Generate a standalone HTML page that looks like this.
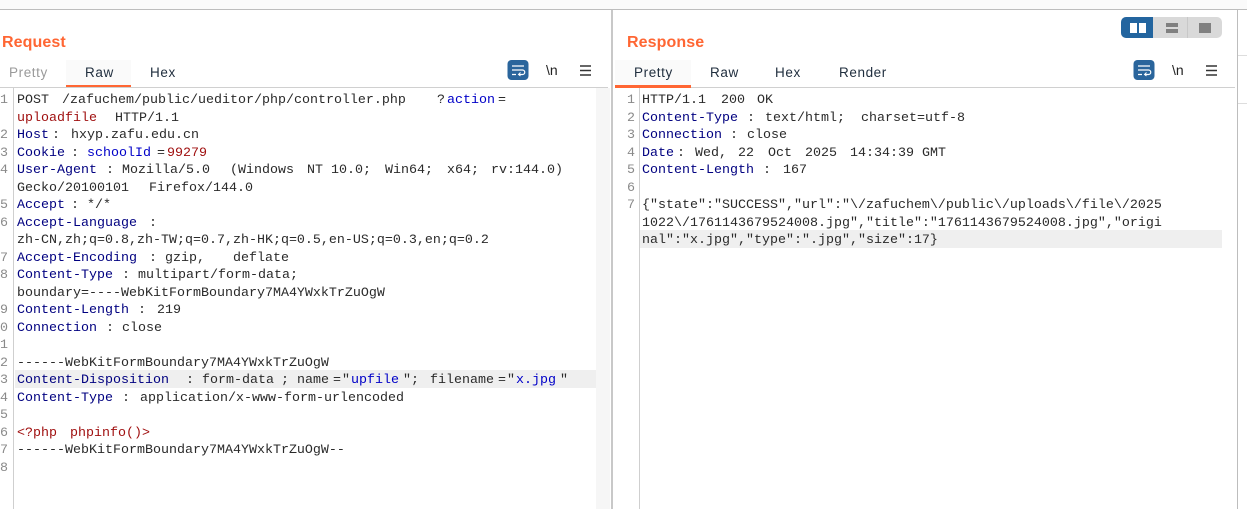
<!DOCTYPE html>
<html><head><meta charset="utf-8">
<style>
html,body{margin:0;padding:0;width:1247px;height:509px;overflow:hidden;background:#fff}
div,span{position:absolute}
.t{font:13.33px/19px "Liberation Mono",monospace;color:#2a2a2a;white-space:pre}
.n{color:#000080}.v{color:#0000c8}.r{color:#a01010}
.g{font:13.33px/19px "Liberation Mono",monospace;color:#8a8a8a;white-space:pre}
.h{font:bold 16px/20px "Liberation Sans",sans-serif;letter-spacing:.1px;color:#ff6633}
.tab{font:13.5px/18px "Liberation Sans",sans-serif;letter-spacing:.6px;color:#1f2d3d;white-space:pre}
.i{font:14px/16px "Liberation Sans",sans-serif;color:#222}
</style></head><body>
<div style="left:0;top:0;width:1247px;height:9px;background:#fafafa"></div>
<div style="left:0;top:9px;width:1247px;height:1px;background:#bdbdbd"></div>
<div style="left:611px;top:10px;width:2px;height:499px;background:#c8c8c8"></div>
<div style="left:1237px;top:10px;width:1px;height:499px;background:#bdbdbd"></div>
<div style="left:1238px;top:55px;width:9px;height:1px;background:#ddd"></div>
<div style="left:1238px;top:103px;width:9px;height:1px;background:#ddd"></div>

<div class="h" style="left:2px;top:33px">Request</div>
<div class="h" style="left:627px;top:33px">Response</div>

<!-- view toggle -->
<div style="left:1121px;top:17px;width:101px;height:21px;background:#d9d9d9;border-radius:5px"></div>
<div style="left:1121px;top:17px;width:32px;height:21px;background:#23659f;border-radius:5px 0 0 5px"></div>
<div style="left:1187px;top:17px;width:1px;height:21px;background:#c8c8c8"></div>
<div style="left:1130px;top:23px;width:7px;height:10px;background:#fff"></div>
<div style="left:1139px;top:23px;width:7px;height:10px;background:#fff"></div>
<div style="left:1166px;top:23px;width:12px;height:4px;background:#808080"></div>
<div style="left:1166px;top:29px;width:12px;height:4px;background:#808080"></div>
<div style="left:1199px;top:23px;width:12px;height:10px;background:#808080"></div>

<!-- tabs left -->
<div style="left:66px;top:60px;width:65px;height:25px;background:#fafafa"></div>
<div style="left:66px;top:85px;width:65px;height:3px;background:#ff6633"></div>
<div class="tab" style="left:9px;top:64px;color:#9a9a9a">Pretty</div>
<div class="tab" style="left:85px;top:64px">Raw</div>
<div class="tab" style="left:150px;top:64px">Hex</div>
<!-- tabs right -->
<div style="left:615px;top:60px;width:76px;height:25px;background:#fafafa"></div>
<div style="left:615px;top:85px;width:76px;height:3px;background:#ff6633"></div>
<div class="tab" style="left:634px;top:64px">Pretty</div>
<div class="tab" style="left:710px;top:64px">Raw</div>
<div class="tab" style="left:775px;top:64px">Hex</div>
<div class="tab" style="left:839px;top:64px">Render</div>

<div style="left:0;top:87px;width:608px;height:1px;background:#d0d0d0"></div>
<div style="left:691px;top:87px;width:544px;height:1px;background:#d0d0d0"></div>

<!-- icons left -->
<svg style="position:absolute;left:507px;top:60px" width="22" height="20" viewBox="0 0 22 20"><rect x="0.5" y="0" width="21" height="20" rx="4" fill="#2a659c"/><path d="M5 6H17M5 10H15.5a2 2 0 0 1 0 4.500H12M5 14.500H9" stroke="#fff" stroke-width="1.200" fill="none"/><path d="M13.500 12.500L11.500 14.500L13.500 16" stroke="#fff" stroke-width="1" fill="none"/></svg>
<div class="i" style="left:546px;top:62px">\n</div>
<svg style="position:absolute;left:580px;top:65px" width="12" height="11"><path d="M0 1H11M0 5.500H11M0 10H11" stroke="#333" stroke-width="1.400"/></svg>
<!-- icons right -->
<svg style="position:absolute;left:1133px;top:60px" width="22" height="20" viewBox="0 0 22 20"><rect x="0.5" y="0" width="21" height="20" rx="4" fill="#2a659c"/><path d="M5 6H17M5 10H15.5a2 2 0 0 1 0 4.500H12M5 14.500H9" stroke="#fff" stroke-width="1.200" fill="none"/><path d="M13.500 12.500L11.500 14.500L13.500 16" stroke="#fff" stroke-width="1" fill="none"/></svg>
<div class="i" style="left:1172px;top:62px">\n</div>
<svg style="position:absolute;left:1206px;top:65px" width="12" height="11"><path d="M0 1H11M0 5.500H11M0 10H11" stroke="#333" stroke-width="1.400"/></svg>

<!-- left editor -->
<div style="left:13px;top:88px;width:1px;height:421px;background:#cfcfcf"></div>
<div style="left:596px;top:88px;width:14px;height:421px;background:#f6f6f6"></div>
<div style="left:15px;top:370px;width:581px;height:18px;background:#efefef"></div>
<!-- right editor -->
<div style="left:639px;top:88px;width:1px;height:421px;background:#cfcfcf"></div>
<div style="left:640px;top:230px;width:582px;height:18px;background:#efefef"></div>

<!-- gutter left -->
<span class="g" style="left:0;top:91px">1</span>
<span class="g" style="left:0;top:126px">2</span>
<span class="g" style="left:0;top:144px">3</span>
<span class="g" style="left:0;top:161px">4</span>
<span class="g" style="left:0;top:196px">5</span>
<span class="g" style="left:0;top:214px">6</span>
<span class="g" style="left:0;top:249px">7</span>
<span class="g" style="left:0;top:266px">8</span>
<span class="g" style="left:0;top:301px">9</span>
<span class="g" style="left:0;top:319px">0</span>
<span class="g" style="left:0;top:336px">1</span>
<span class="g" style="left:0;top:354px">2</span>
<span class="g" style="left:0;top:371px">3</span>
<span class="g" style="left:0;top:389px">4</span>
<span class="g" style="left:0;top:406px">5</span>
<span class="g" style="left:0;top:424px">6</span>
<span class="g" style="left:0;top:441px">7</span>
<span class="g" style="left:0;top:459px">8</span>

<!-- left text -->
<span class="t" style="left:17px;top:91px">POST</span>
<span class="t" style="left:62px;top:91px">/zafuchem/public/ueditor/php/controller.php</span>
<span class="t" style="left:437px;top:91px">?</span>
<span class="t v" style="left:447px;top:91px">action</span>
<span class="t" style="left:498px;top:91px">=</span>

<span class="t r" style="left:17px;top:109px">uploadfile</span>
<span class="t" style="left:115px;top:109px">HTTP/1.1</span>

<span class="t n" style="left:17px;top:126px">Host</span>
<span class="t" style="left:52px;top:126px">:</span>
<span class="t" style="left:71px;top:126px">hxyp.zafu.edu.cn</span>

<span class="t n" style="left:17px;top:144px">Cookie</span>
<span class="t" style="left:71px;top:144px">:</span>
<span class="t v" style="left:87px;top:144px">schoolId</span>
<span class="t" style="left:157px;top:144px">=</span>
<span class="t r" style="left:167px;top:144px">99279</span>

<span class="t n" style="left:17px;top:161px">User-Agent</span>
<span class="t" style="left:106px;top:161px">:</span>
<span class="t" style="left:122px;top:161px">Mozilla/5.0</span>
<span class="t" style="left:230px;top:161px">(Windows</span>
<span class="t" style="left:307px;top:161px">NT</span>
<span class="t" style="left:331px;top:161px">10.0;</span>
<span class="t" style="left:385px;top:161px">Win64;</span>
<span class="t" style="left:447px;top:161px">x64;</span>
<span class="t" style="left:491px;top:161px">rv:144.0)</span>

<span class="t" style="left:17px;top:179px">Gecko/20100101</span>
<span class="t" style="left:149px;top:179px">Firefox/144.0</span>

<span class="t n" style="left:17px;top:196px">Accept</span>
<span class="t" style="left:71px;top:196px">:</span>
<span class="t" style="left:87px;top:196px">*/*</span>

<span class="t n" style="left:17px;top:214px">Accept-Language</span>
<span class="t" style="left:149px;top:214px">:</span>

<span class="t" style="left:17px;top:231px">zh-CN,zh;q=0.8,zh-TW;q=0.7,zh-HK;q=0.5,en-US;q=0.3,en;q=0.2</span>

<span class="t n" style="left:17px;top:249px">Accept-Encoding</span>
<span class="t" style="left:149px;top:249px">:</span>
<span class="t" style="left:165px;top:249px">gzip,</span>
<span class="t" style="left:233px;top:249px">deflate</span>

<span class="t n" style="left:17px;top:266px">Content-Type</span>
<span class="t" style="left:122px;top:266px">:</span>
<span class="t" style="left:138px;top:266px">multipart/form-data;</span>

<span class="t" style="left:17px;top:284px">boundary=----WebKitFormBoundary7MA4YWxkTrZuOgW</span>

<span class="t n" style="left:17px;top:301px">Content-Length</span>
<span class="t" style="left:138px;top:301px">:</span>
<span class="t" style="left:157px;top:301px">219</span>

<span class="t n" style="left:17px;top:319px">Connection</span>
<span class="t" style="left:106px;top:319px">:</span>
<span class="t" style="left:122px;top:319px">close</span>

<span class="t" style="left:17px;top:354px">------WebKitFormBoundary7MA4YWxkTrZuOgW</span>

<span class="t n" style="left:17px;top:371px">Content-Disposition</span>
<span class="t" style="left:186px;top:371px">:</span>
<span class="t" style="left:202px;top:371px">form-data</span>
<span class="t" style="left:281px;top:371px">;</span>
<span class="t" style="left:297px;top:371px">name</span>
<span class="t" style="left:333px;top:371px">=</span>
<span class="t" style="left:342px;top:371px">"</span>
<span class="t v" style="left:351px;top:371px">upfile</span>
<span class="t" style="left:403px;top:371px">";</span>
<span class="t" style="left:430px;top:371px">filename</span>
<span class="t" style="left:498px;top:371px">=</span>
<span class="t" style="left:507px;top:371px">"</span>
<span class="t v" style="left:516px;top:371px">x.jpg</span>
<span class="t" style="left:560px;top:371px">"</span>

<span class="t n" style="left:17px;top:389px">Content-Type</span>
<span class="t" style="left:122px;top:389px">:</span>
<span class="t" style="left:140px;top:389px">application/x-www-form-urlencoded</span>

<span class="t r" style="left:17px;top:424px">&lt;?php</span>
<span class="t r" style="left:70px;top:424px">phpinfo()&gt;</span>

<span class="t" style="left:17px;top:441px">------WebKitFormBoundary7MA4YWxkTrZuOgW--</span>

<!-- gutter right -->
<span class="g" style="left:627px;top:91px">1</span>
<span class="g" style="left:627px;top:109px">2</span>
<span class="g" style="left:627px;top:126px">3</span>
<span class="g" style="left:627px;top:144px">4</span>
<span class="g" style="left:627px;top:161px">5</span>
<span class="g" style="left:627px;top:179px">6</span>
<span class="g" style="left:627px;top:196px">7</span>

<!-- right text -->
<span class="t" style="left:642px;top:91px">HTTP/1.1</span>
<span class="t" style="left:721px;top:91px">200</span>
<span class="t" style="left:757px;top:91px">OK</span>

<span class="t n" style="left:642px;top:109px">Content-Type</span>
<span class="t" style="left:747px;top:109px">:</span>
<span class="t" style="left:765px;top:109px">text/html;</span>
<span class="t" style="left:861px;top:109px">charset=utf-8</span>

<span class="t n" style="left:642px;top:126px">Connection</span>
<span class="t" style="left:730px;top:126px">:</span>
<span class="t" style="left:747px;top:126px">close</span>

<span class="t n" style="left:642px;top:144px">Date</span>
<span class="t" style="left:677px;top:144px">:</span>
<span class="t" style="left:695px;top:144px">Wed,</span>
<span class="t" style="left:738px;top:144px">22</span>
<span class="t" style="left:768px;top:144px">Oct</span>
<span class="t" style="left:805px;top:144px">2025</span>
<span class="t" style="left:850px;top:144px">14:34:39</span>
<span class="t" style="left:922px;top:144px">GMT</span>

<span class="t n" style="left:642px;top:161px">Content-Length</span>
<span class="t" style="left:763px;top:161px">:</span>
<span class="t" style="left:783px;top:161px">167</span>

<span class="t" style="left:642px;top:196px">{"state":"SUCCESS","url":"\/zafuchem\/public\/uploads\/file\/2025</span>
<span class="t" style="left:642px;top:214px">1022\/1761143679524008.jpg","title":"1761143679524008.jpg","origi</span>
<span class="t" style="left:642px;top:231px">nal":"x.jpg","type":".jpg","size":17}</span>
</body></html>
